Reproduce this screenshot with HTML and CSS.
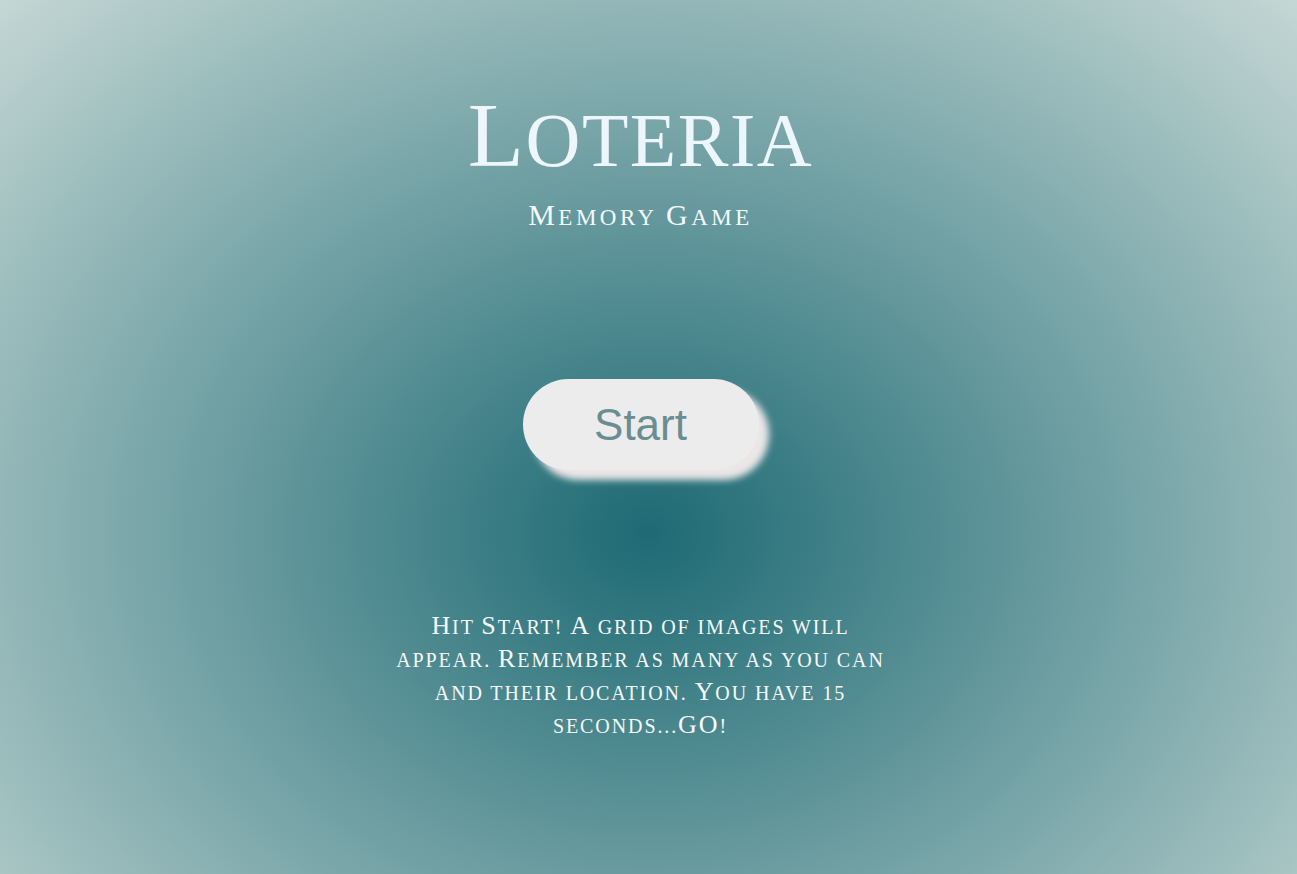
FILE: index.html
```html
<!DOCTYPE html>
<html lang="en">
<head>
<meta charset="utf-8">
<title>Loteria</title>
<link rel="stylesheet" href="styles.css">
</head>
<body>
<main class="screen">
  <h1 class="title"><span class="cap">L</span>oteria</h1>
  <h2 class="subtitle"><span class="cap">M</span>emory <span class="cap">G</span>ame</h2>
  <button class="start" type="button">Start</button>
  <p class="intro"><span class="cap">H</span>it <span class="cap">S</span>tart! <span class="cap">A</span> grid of images will appear. <span class="cap">R</span>emember as many as you can and their location. <span class="cap">Y</span>ou have 15 seconds...<span class="cap">GO</span>!</p>
</main>
</body>
</html>
```
FILE: styles.css
```css
html {
  height: 100%;
  background: radial-gradient(ellipse at 50% 61%, #1e6a74 0%, #c4d7d4 100%);
}

body {
  margin: 0;
  height: 100%;
  font-family: "Liberation Serif", "DejaVu Serif", serif;
}

.screen {
  display: flex;
  flex-direction: column;
  align-items: center;
  padding: 90px 16px 0 0;
}

.title {
  margin: 0;
  font-size: 76px;
  line-height: 100px;
  font-weight: normal;
  text-transform: uppercase;
  letter-spacing: 1.5px;
  color: #eef6fd;
}

.title .cap {
  font-size: 92px;
  line-height: 88px;
}

.subtitle {
  margin: 12px 0 0;
  font-size: 23px;
  line-height: 30px;
  font-weight: normal;
  text-transform: uppercase;
  letter-spacing: 3.5px;
  color: #f4f8fb;
}

.subtitle .cap {
  font-size: 30px;
  line-height: 25px;
}

.start {
  margin-top: 146px;
  width: 236px;
  height: 91px;
  border: none;
  border-radius: 46px;
  background: #ececec;
  color: #6a8d92;
  font-family: "Liberation Sans", Arial, sans-serif;
  font-size: 44px;
  box-shadow: 10px 10px 7px #ebe7e7;
  cursor: pointer;
}

.intro {
  margin: 141px 0 0;
  width: 505px;
  font-size: 20px;
  line-height: 33px;
  letter-spacing: 1.9px;
  text-align: center;
  text-transform: uppercase;
  color: #f6f9fa;
}

.intro .cap {
  font-size: 26px;
  line-height: 29px;
}
```
